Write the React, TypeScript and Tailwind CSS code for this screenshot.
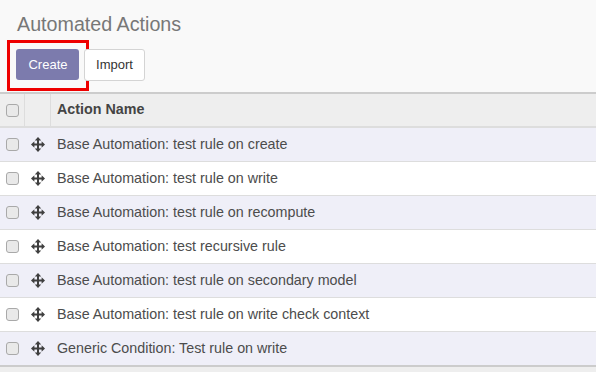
import React from "react";

const rows = [
  "Base Automation: test rule on create",
  "Base Automation: test rule on write",
  "Base Automation: test rule on recompute",
  "Base Automation: test recursive rule",
  "Base Automation: test rule on secondary model",
  "Base Automation: test rule on write check context",
  "Generic Condition: Test rule on write",
];

function MoveIcon() {
  return (
    <svg width="14" height="15" viewBox="0 0 14 15" fill="#3f3f3f">
      <rect x="6" y="2" width="2" height="11" />
      <rect x="2" y="6.5" width="10" height="2" />
      <polygon points="7,0 10.2,3.4 3.8,3.4" />
      <polygon points="7,15 10.2,11.6 3.8,11.6" />
      <polygon points="0,7.5 3.4,4.3 3.4,10.7" />
      <polygon points="14,7.5 10.6,4.3 10.6,10.7" />
    </svg>
  );
}

function Check() {
  return (
    <div className="w-[13px] h-[13px] rounded-[3px] border border-[#a9a9a9] bg-[#e9e9e9]" />
  );
}

export default function App() {
  return (
    <div
      className="w-[596px] h-[372px] bg-[#f9f9f9] overflow-hidden text-[#4c4c4c]"
      style={{ fontFamily: "'Liberation Sans', Arial, sans-serif" }}
    >
      <div className="pl-[17px] pt-[12px] h-[40px]">
        <div className="text-[19.7px] leading-[24px] text-[#777777]">Automated Actions</div>
      </div>
      <div className="flex items-center pl-[7px] h-[52px] pb-[1px]">
        <div className="border-[3px] border-[#ee0000] p-[6px] pr-[7px] pb-[8px]">
          <div className="w-[63px] h-[31px] rounded-[3px] bg-[#7c7bad] text-white text-[13px] flex items-center justify-center pl-[1px]">
            Create
          </div>
        </div>
        <div className="ml-[-5px] mt-[-1px] w-[61px] h-[32px] rounded-[3px] bg-white border border-[#d4d4d4] text-[13px] text-[#333] flex items-center justify-center">
          Import
        </div>
      </div>
      <div className="border-t-2 border-[#cccccc]">
        <div className="flex h-[34px] bg-[#eeeeee] border-b-2 border-[#dddddd] items-center">
          <div className="w-[25px] h-full flex items-center justify-center border-r border-[#dddddd]">
            <Check />
          </div>
          <div className="w-[26px] h-full border-r border-[#dddddd]" />
          <div className="pl-[6px] text-[14.3px] font-bold text-[#444]">Action Name</div>
        </div>
        {rows.map((r, i) => (
          <div
            key={i}
            className={`flex h-[34px] items-center border-b border-[#dddddd] ${
              i % 2 === 0 ? "bg-[#efeff8]" : "bg-white"
            }`}
          >
            <div className="w-[25px] flex justify-center">
              <Check />
            </div>
            <div className="w-[26px] flex justify-center">
              <MoveIcon />
            </div>
            <div className="pl-[6px] text-[14.3px]">{r}</div>
          </div>
        ))}
        <div className="border-t-2 border-[#cccccc] -mt-[1px] h-[10px] bg-[#eeeeee]" />
      </div>
    </div>
  );
}
